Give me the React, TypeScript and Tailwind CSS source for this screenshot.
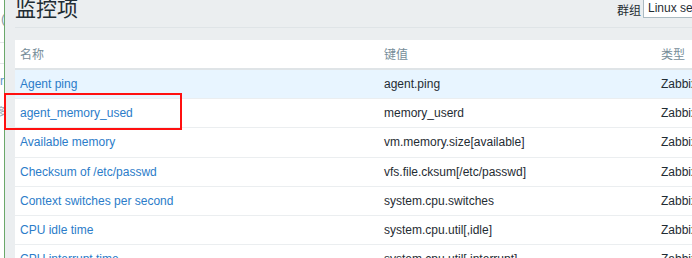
const rows = [
  { name: "Agent ping", key: "agent.ping", active: true },
  { name: "agent_memory_used", key: "memory_userd" },
  { name: "Available memory", key: "vm.memory.size[available]" },
  { name: "Checksum of /etc/passwd", key: "vfs.file.cksum[/etc/passwd]" },
  { name: "Context switches per second", key: "system.cpu.switches" },
  { name: "CPU idle time", key: "system.cpu.util[,idle]" },
  { name: "CPU interrupt time", key: "system.cpu.util[,interrupt]" },
];

const cjk = { fontFamily: '"Noto Sans CJK SC", sans-serif' };

export default function App() {
  return (
    <div
      className="relative flex h-[258px] w-[692px] overflow-hidden bg-[#ebeef0] text-[12px] text-[#1f2c33]"
      style={{ fontFamily: '"Liberation Sans", Arial, "Noto Sans CJK SC", sans-serif' }}
    >
      {/* sliver of the window behind */}
      <div className="relative w-[4px] shrink-0 overflow-hidden bg-white text-[#8a9aa4]">
        <span className="absolute left-[1px] top-[12px] text-[13px] leading-none">(</span>
        <div className="absolute left-0 top-[42px] h-px w-full bg-[#e3e6e8]" />
        <div className="absolute left-0 top-[63px] h-px w-full bg-[#e3e6e8]" />
        <span className="absolute left-0 top-[75px] text-[12px] leading-none text-[#5b93c6]">r</span>
        <span className="absolute left-[-4px] top-[107px] text-[11px] leading-none text-[#9aaab4]">多</span>
      </div>
      <div className="w-px shrink-0 bg-[#6aa86a]" />

      <div className="flex min-w-0 flex-1 flex-col pl-[10px]">
        <div className="flex h-[28px] items-end justify-between border-b border-[#dfe4e7]">
          <h1 className="mb-[9px] text-[21px] leading-none text-[#1f2c33]" style={cjk}>
            监控项
          </h1>
          <div className="flex h-full w-[75px] shrink-0 items-start whitespace-nowrap">
            <span className="mt-[1px] shrink-0 text-[12px]" style={cjk}>
              群组
            </span>
            <div className="ml-[2px] mt-[-2px] flex h-[20px] flex-1 items-center border border-[#acbbc2] bg-white pl-[4px]">
              Linux servers
            </div>
          </div>
        </div>

        <div className="mt-[12px] w-[720px] bg-white">
          <div className="grid h-[30px] grid-cols-[364px_277px_1fr] items-center border-b-2 border-[#dfe4e7] text-[#768d99]">
            <div className="pl-[5px]" style={cjk}>名称</div>
            <div className="pl-[5px]" style={cjk}>键值</div>
            <div className="pl-[5px]" style={cjk}>类型</div>
          </div>
          {rows.map((r) => (
            <div
              key={r.name}
              className={`grid h-[29.2px] grid-cols-[364px_277px_1fr] items-center border-b border-[#ebeef0] whitespace-nowrap ${
                r.active ? "bg-[#e8f5ff]" : "bg-white"
              }`}
            >
              <div className="pl-[5px] text-[#2b7cc9]">{r.name}</div>
              <div className="pl-[5px]">{r.key}</div>
              <div className="pl-[5px]">Zabbix agent</div>
            </div>
          ))}
        </div>
      </div>

      <div className="absolute left-[4px] top-[93px] h-[37px] w-[178px] border-2 border-[#ff1010]" />
    </div>
  );
}
